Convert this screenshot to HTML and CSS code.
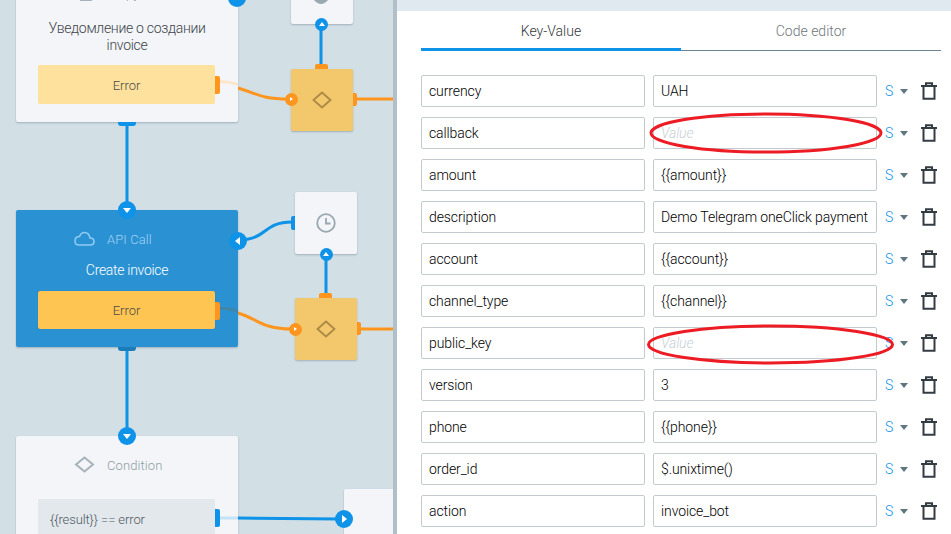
FILE: index.html
```html
<!DOCTYPE html>
<html lang="en">
<head>
<meta charset="utf-8">
<title>Process editor</title>
<link rel="stylesheet" href="styles.css">
</head>
<body>
<div class="app">
  <section class="canvas">
    <svg class="wires" width="393" height="534" viewBox="0 0 393 534" fill="none">
      <path class="w-blue" d="M127 122V210"/>
      <path class="w-blue" d="M127 347V436"/>
      <path class="w-blue" d="M321 24V66"/>
      <path class="w-blue" d="M326 254V296"/>
      <path class="w-blue" d="M238 240C268 240 262 222 292 222"/>
      <path class="w-orange" d="M238 88C258 94 262 99 288 99"/>
      <path class="w-orange" d="M357 99H393"/>
      <path class="w-orange" d="M238 313C258 319 262 329 292 329"/>
      <path class="w-orange" d="M361 329H393"/>
      <path class="w-blue" d="M238 518L340 519"/>
    </svg>

    <article class="node task n1">
      <div class="node-head cut">
        <svg class="ico" width="14" height="8" viewBox="0 0 14 8" fill="none"><path d="M12 0V2.500Q12 4 10.500 4H0" stroke="#a7b3bb" stroke-width="2"/></svg>
        <span class="kind">Copy task</span>
      </div>
      <p class="title">Уведомление о создании invoice</p>
      <div class="cond error pale">Error<i class="port orange"></i></div>
      <svg class="fade" width="18" height="6" viewBox="0 0 18 6" fill="none"><path d="M0 1.500C8 1.500 12 2.500 18 4.500" stroke="#fde6cc" stroke-width="3"/></svg>
      <i class="tab-bottom"></i>
    </article>

    <article class="node task n2">
      <div class="node-head">
        <svg class="ico" width="21" height="15" viewBox="0 0 21 15" fill="none"><path d="M5 14H16Q20 14 20 10.500Q20 7 16 7Q15 1.500 10.500 1.500Q7 1.500 5.500 5.500Q1 5.500 1 10Q1 14 5 14Z" stroke="#8fcbf3" stroke-width="1.600"/></svg>
        <span class="kind">API Call</span>
      </div>
      <p class="title">Create invoice</p>
      <div class="cond error">Error<i class="port orange"></i></div>
      <svg class="fade f2" width="18" height="6" viewBox="0 0 18 6" fill="none"><path d="M0 1C8 1 12 2.500 18 4.500" stroke="#3f86a8" stroke-width="3"/></svg>
      <i class="tab-bottom"></i>
    </article>

    <article class="node task n3">
      <div class="node-head">
        <svg class="ico" width="21" height="17" viewBox="0 0 21 17" fill="none"><path d="M10.500 1.500L19 8.500L10.500 15.500L2 8.500Z" stroke="#a7b3bb" stroke-width="2"/></svg>
        <span class="kind">Condition</span>
      </div>
      <div class="cond query">{{result}} == error<i class="port blue"></i></div>
      <svg class="fade f3" width="18" height="4" viewBox="0 0 18 4" fill="none"><path d="M0 2H18" stroke="#c4e3f7" stroke-width="3"/></svg>
    </article>

    <article class="node small-top"><svg class="clock-cut" width="20" height="4" viewBox="0 0 20 4"><path d="M3 0Q10 8 17 0Z" fill="#9aa8b1"/></svg></article>

    <article class="node gate g1">
      <svg width="20" height="20" viewBox="0 0 20 20" fill="none"><path d="M10 2.500L18.500 10L10 17.500L1.500 10Z" stroke="#ab8a45" stroke-width="1.800"/></svg>
      <i class="tab-top"></i><i class="tab-right"></i>
    </article>

    <article class="node timer">
      <svg width="20" height="20" viewBox="0 0 20 20" fill="none"><circle cx="10" cy="10" r="8.800" stroke="#9aa8b1" stroke-width="1.800"/><path d="M10 5V10.500H14.500" stroke="#9aa8b1" stroke-width="1.800"/></svg>
      <i class="tab-left"></i>
    </article>

    <article class="node gate g2">
      <svg width="20" height="20" viewBox="0 0 20 20" fill="none"><path d="M10 2.500L18.500 10L10 17.500L1.500 10Z" stroke="#ab8a45" stroke-width="1.800"/></svg>
      <i class="tab-top"></i><i class="tab-right"></i>
    </article>

    <article class="node stub"></article>

    <b class="dot big blue-dot d1"></b>
    <b class="dot big blue-dot d2"><i class="arr down"></i></b>
    <b class="dot big blue-dot d3"><i class="arr left"></i></b>
    <b class="dot big blue-dot d4"><i class="arr down"></i></b>
    <b class="dot big blue-dot d5"><i class="arr right"></i></b>
    <b class="dot blue-dot d6"><i class="arr up"></i></b>
    <b class="dot blue-dot d7"><i class="arr up"></i></b>
    <b class="dot orange-dot d8"><i class="arr right"></i></b>
    <b class="dot orange-dot d9"><i class="arr right"></i></b>
  </section>

  <section class="panel">
    <div class="panel-top"></div>
    <div class="panel-body">
      <nav class="tabs">
        <a class="tab active">Key-Value</a>
        <a class="tab">Code editor</a>
      </nav>
      <div class="rows">
        <div class="row"><div class="field">currency</div><div class="field">UAH</div><span class="type">S</span><i class="caret"></i><svg class="trash" width="16" height="18" viewBox="0 0 16 18" fill="none"><path d="M0 4H16M5 4V1.200H11V4M2.500 4V16.800H13.500V4" stroke="#343c43" stroke-width="2"/></svg></div>
        <div class="row"><div class="field">callback</div><div class="field empty">Value</div><span class="type">S</span><i class="caret"></i><svg class="trash" width="16" height="18" viewBox="0 0 16 18" fill="none"><path d="M0 4H16M5 4V1.200H11V4M2.500 4V16.800H13.500V4" stroke="#343c43" stroke-width="2"/></svg></div>
        <div class="row"><div class="field">amount</div><div class="field">{{amount}}</div><span class="type">S</span><i class="caret"></i><svg class="trash" width="16" height="18" viewBox="0 0 16 18" fill="none"><path d="M0 4H16M5 4V1.200H11V4M2.500 4V16.800H13.500V4" stroke="#343c43" stroke-width="2"/></svg></div>
        <div class="row"><div class="field">description</div><div class="field">Demo Telegram oneClick payment</div><span class="type">S</span><i class="caret"></i><svg class="trash" width="16" height="18" viewBox="0 0 16 18" fill="none"><path d="M0 4H16M5 4V1.200H11V4M2.500 4V16.800H13.500V4" stroke="#343c43" stroke-width="2"/></svg></div>
        <div class="row"><div class="field">account</div><div class="field">{{account}}</div><span class="type">S</span><i class="caret"></i><svg class="trash" width="16" height="18" viewBox="0 0 16 18" fill="none"><path d="M0 4H16M5 4V1.200H11V4M2.500 4V16.800H13.500V4" stroke="#343c43" stroke-width="2"/></svg></div>
        <div class="row"><div class="field">channel_type</div><div class="field">{{channel}}</div><span class="type">S</span><i class="caret"></i><svg class="trash" width="16" height="18" viewBox="0 0 16 18" fill="none"><path d="M0 4H16M5 4V1.200H11V4M2.500 4V16.800H13.500V4" stroke="#343c43" stroke-width="2"/></svg></div>
        <div class="row"><div class="field">public_key</div><div class="field empty">Value</div><span class="type">S</span><i class="caret"></i><svg class="trash" width="16" height="18" viewBox="0 0 16 18" fill="none"><path d="M0 4H16M5 4V1.200H11V4M2.500 4V16.800H13.500V4" stroke="#343c43" stroke-width="2"/></svg></div>
        <div class="row"><div class="field">version</div><div class="field">3</div><span class="type">S</span><i class="caret"></i><svg class="trash" width="16" height="18" viewBox="0 0 16 18" fill="none"><path d="M0 4H16M5 4V1.200H11V4M2.500 4V16.800H13.500V4" stroke="#343c43" stroke-width="2"/></svg></div>
        <div class="row"><div class="field">phone</div><div class="field">{{phone}}</div><span class="type">S</span><i class="caret"></i><svg class="trash" width="16" height="18" viewBox="0 0 16 18" fill="none"><path d="M0 4H16M5 4V1.200H11V4M2.500 4V16.800H13.500V4" stroke="#343c43" stroke-width="2"/></svg></div>
        <div class="row"><div class="field">order_id</div><div class="field">$.unixtime()</div><span class="type">S</span><i class="caret"></i><svg class="trash" width="16" height="18" viewBox="0 0 16 18" fill="none"><path d="M0 4H16M5 4V1.200H11V4M2.500 4V16.800H13.500V4" stroke="#343c43" stroke-width="2"/></svg></div>
        <div class="row"><div class="field">action</div><div class="field">invoice_bot</div><span class="type">S</span><i class="caret"></i><svg class="trash" width="16" height="18" viewBox="0 0 16 18" fill="none"><path d="M0 4H16M5 4V1.200H11V4M2.500 4V16.800H13.500V4" stroke="#343c43" stroke-width="2"/></svg></div>
      </div>
    </div>
    <svg class="marks" width="554" height="534" viewBox="0 0 554 534" fill="none">
      <ellipse cx="369" cy="133" rx="115" ry="19" stroke="#ed1c24" stroke-width="3"/>
      <ellipse cx="373.500" cy="344.500" rx="122" ry="18.500" stroke="#ed1c24" stroke-width="3"/>
    </svg>
  </section>
</div>
</body>
</html>
```
FILE: styles.css
```css
* { box-sizing: border-box; }
html, body { margin: 0; height: 100%; overflow: hidden; }
body { font-family: "Roboto", "Open Sans", sans-serif; font-weight: 300; font-size: 14px; color: #222; }
.app { display: flex; width: 951px; height: 534px; overflow: hidden; }

/* diagram canvas: nodes live on a free canvas */
.canvas { position: relative; flex: 0 0 393px; height: 534px; background: #d2dfe5; overflow: hidden; }
.wires { position: absolute; left: 0; top: 0; }
.w-blue { stroke: #0f93e8; stroke-width: 3; }
.w-orange { stroke: #fd951e; stroke-width: 3; }
.node { position: absolute; border-radius: 2px; background: #f3f5f8; box-shadow: 0 1px 2px rgba(70, 90, 105, .35); }
.task { left: 16px; width: 222px; }
.n1 { top: -30px; height: 152px; color: #3e4449; }
.n2 { top: 210px; height: 137px; background: #2a91d3; color: #fff; }
.n3 { top: 436px; height: 130px; }
.node-head { display: flex; align-items: center; gap: 12px; height: 29px; margin-top: 14px; padding-left: 58px; }
.n1 .node-head { margin-top: 0; height: 34px; padding-left: 64px; gap: 16px; align-items: flex-end; }
.n1 .kind { line-height: 16px; margin-bottom: 2px; padding-top: 0; }
.n1 .ico { margin-bottom: 0; }
.kind { padding-top: 2px; font-size: 13px; letter-spacing: .1px; color: #8f9da7; }
.n2 .kind { color: #a3d2f2; }
.title { margin: 13px 24px 0; font-size: 14px; line-height: 17px; text-align: center; letter-spacing: -.3px; }
.n1 .title { margin-top: 16px; }
.n2 .title { margin-top: 9px; }
.cond { position: absolute; left: 22px; width: 177px; border-radius: 2px; color: #4b4b46; display: flex; align-items: center; justify-content: center; font-size: 13px; }
.error { height: 39px; background: #fec553; box-shadow: 0 0 1px rgba(0, 0, 0, .25); }
.error.pale { background: #fee19c; box-shadow: none; }
.n1 .cond { top: 95px; padding-top: 1px; }
.n2 .cond { top: 81px; height: 38px; }
.query { top: 63px; height: 50px; background: #e2e8ec; justify-content: flex-start; padding: 0 12px 10px; color: #4f5a62; letter-spacing: -.1px; }
.port { position: absolute; left: 177px; top: 11px; width: 4.500px; height: 18px; border-radius: 0 2px 2px 0; }
.port.orange { background: #fd951e; }
.port.blue { background: #0f93e8; top: 10px; }
.fade { position: absolute; left: 204px; top: 110px; }
.fade.f2 { top: 97px; }
.fade.f3 { top: 80px; }
.tab-bottom { position: absolute; left: 102px; top: 100%; width: 18px; height: 4px; border-radius: 0 0 3px 3px; background: #0f93e8; }
.n2 .tab-bottom { background: #1c7cba; }

.small-top { left: 291px; top: -40px; width: 62px; height: 64px; }
.clock-cut { position: absolute; left: 20px; top: 40px; display: block; }
.gate { width: 62px; height: 62px; background: #f3c76b; display: flex; align-items: center; justify-content: center; }
.g1 { left: 291px; top: 69px; }
.g2 { left: 295px; top: 298px; height: 62px; }
.timer { left: 295px; top: 192px; width: 62px; height: 62px; display: flex; align-items: center; justify-content: center; }
.tab-top { position: absolute; left: 24px; top: -5px; width: 13px; height: 5px; border-radius: 2px 2px 0 0; background: #fd951e; }
.tab-right { position: absolute; left: 100%; top: 24px; width: 4px; height: 13px; border-radius: 0 2px 2px 0; background: #fd951e; }
.tab-left { position: absolute; right: 100%; top: 24px; width: 4px; height: 14px; border-radius: 2px 0 0 2px; background: #0f93e8; }
.stub { left: 344px; top: 489px; width: 60px; height: 60px; }

.dot { position: absolute; width: 13px; height: 13px; margin: -6.500px 0 0 -6.500px; border-radius: 50%; display: flex; align-items: center; justify-content: center; }
.dot.big { width: 18px; height: 18px; margin: -9px 0 0 -9px; }
.blue-dot { background: #0f93e8; }
.orange-dot { background: #fd951e; }
.d1 { left: 237px; top: -2px; }
.d2 { left: 127px; top: 210px; }
.d3 { left: 237.500px; top: 241px; }
.d4 { left: 127px; top: 436px; }
.d5 { left: 344px; top: 519px; }
.d6 { left: 321.500px; top: 24px; }
.d7 { left: 326px; top: 254px; }
.d8 { left: 291px; top: 99px; }
.d9 { left: 295px; top: 329px; }
.arr { width: 0; height: 0; border: 0 solid transparent; }
.arr.down { border-width: 5px 4px 0; border-top-color: #fff; }
.big .arr.left { border-width: 4px 5px 4px 0; border-right-color: #fff; }
.big .arr.right { border-width: 4px 0 4px 5px; border-left-color: #fff; }
.arr.up { border-width: 0 3px 4px; border-bottom-color: #fff; }
.arr.right { border-width: 2.500px 0 2.500px 3.500px; border-left-color: #fff; }

/* settings panel */
.panel { position: relative; flex: 1; height: 534px; background: #fff; border-left: 4px solid #b0bfc8; }
.panel-top { height: 11px; background: #e0e9ef; }
.panel-body { padding: 0 10px 0 24px; }
.tabs { display: grid; grid-template-columns: 260px 260px; height: 40px; border-bottom: 1px solid #6f8490; }
.tab { display: flex; align-items: center; justify-content: center; height: 40px; font-size: 14px; color: #6f767b; padding-bottom: 1px; }
.tab.active { color: #33383c; border-bottom: 3px solid #0f93e8; padding-top: 3px; }
.rows { display: flex; flex-direction: column; gap: 10px; margin-top: 24px; }
.row { display: flex; align-items: center; height: 32px; }
.field { flex: 0 0 224px; min-width: 0; height: 32px; margin-right: 8px; padding: 0 7px; display: flex; align-items: center; border: 1px solid #c3cbd0; border-radius: 2px; font-size: 14px; letter-spacing: -.1px; white-space: nowrap; overflow: hidden; color: #000; }
.field.empty { color: #c8d0d6; font-style: italic; }
.type { width: 15px; font-size: 14px; color: #0f93e8; }
.caret { width: 0; height: 0; border-style: solid; border-width: 5px 4.500px 0; border-color: #5f7680 transparent transparent; margin: 0 13px 0 0; }
.trash { display: block; margin-top: -1px; }
.marks { position: absolute; left: 0; top: 0; pointer-events: none; }
```
